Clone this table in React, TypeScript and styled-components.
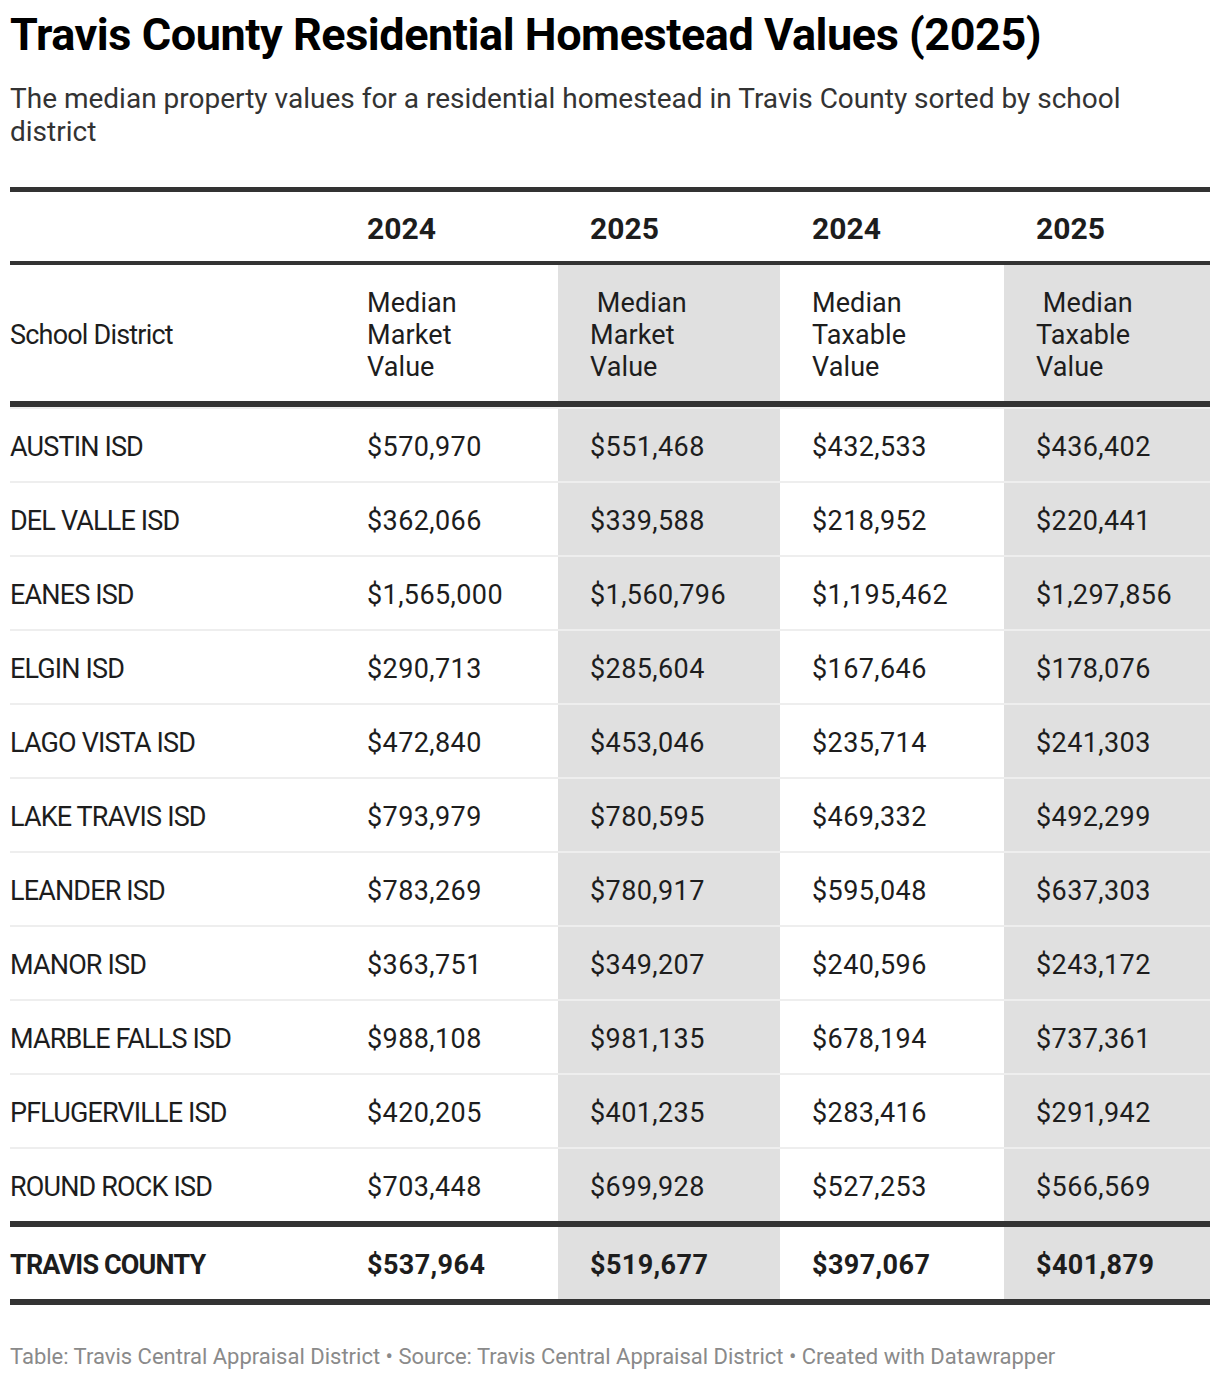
import React from "react";
import styled, { createGlobalStyle } from "styled-components";

const GlobalStyle = createGlobalStyle`
  body {
    margin: 0;
    background: #fff;
    font-family: Roboto, "Liberation Sans", sans-serif;
    color: #1d1d1d;
  }
`;

const Page = styled.div`
  width: 1200px;
  padding: 0 10px;
`;

const Title = styled.h1`
  margin: 0;
  padding-top: 10px;
  font-size: 45px;
  line-height: 50px;
  font-weight: 700;
  color: #000;
  letter-spacing: -0.45px;
`;

const Subtitle = styled.p`
  margin: 22px 0 0;
  font-size: 28px;
  line-height: 33px;
  color: #333;
`;

const Table = styled.div`
  margin-top: 39px;
  border-top: 5px solid #333;
  border-bottom: 6px solid #333;
`;

const COLS = "325px 223px 222px 224px 206px";

const YearRow = styled.div`
  display: grid;
  grid-template-columns: ${COLS};
  height: 69px;
  align-items: center;
  border-bottom: 4px solid #333;
`;

const Year = styled.div`
  padding: 3px 0 0 32px;
  font-size: 30px;
  font-weight: 700;
`;

const LabelRow = styled.div`
  display: grid;
  grid-template-columns: ${COLS};
  height: 136px;
  border-bottom: 6px solid #333;
`;

const Row = styled.div<{ $total?: boolean }>`
  display: grid;
  grid-template-columns: ${COLS};
  height: 72px;
  border-top: ${(p) => (p.$total ? "6px solid #333" : "2px solid rgba(0, 0, 0, 0.065)")};
  font-weight: ${(p) => (p.$total ? 700 : 400)};
`;

const Cell = styled.div<{ $shaded?: boolean; $first?: boolean }>`
  display: flex;
  align-items: center;
  padding: 3px 0 0 ${(p) => (p.$first ? "0" : "32px")};
  background: ${(p) => (p.$shaded ? "#e0e0e0" : "transparent")};
  font-size: 27px;
  line-height: 32px;
  letter-spacing: ${(p) => (p.$first ? "-0.85px" : "0.4px")};
  white-space: pre-line;
`;

const Label = styled(Cell)`
  letter-spacing: ${(p) => (p.$first ? "-0.8px" : "0.1px")};
`;

const Footer = styled.div`
  margin-top: 39px;
  font-size: 22px;
  color: #8a8a8a;
`;

const rows: [string, string, string, string, string][] = [
  ["AUSTIN ISD", "$570,970", "$551,468", "$432,533", "$436,402"],
  ["DEL VALLE ISD", "$362,066", "$339,588", "$218,952", "$220,441"],
  ["EANES ISD", "$1,565,000", "$1,560,796", "$1,195,462", "$1,297,856"],
  ["ELGIN ISD", "$290,713", "$285,604", "$167,646", "$178,076"],
  ["LAGO VISTA ISD", "$472,840", "$453,046", "$235,714", "$241,303"],
  ["LAKE TRAVIS ISD", "$793,979", "$780,595", "$469,332", "$492,299"],
  ["LEANDER ISD", "$783,269", "$780,917", "$595,048", "$637,303"],
  ["MANOR ISD", "$363,751", "$349,207", "$240,596", "$243,172"],
  ["MARBLE FALLS ISD", "$988,108", "$981,135", "$678,194", "$737,361"],
  ["PFLUGERVILLE ISD", "$420,205", "$401,235", "$283,416", "$291,942"],
  ["ROUND ROCK ISD", "$703,448", "$699,928", "$527,253", "$566,569"],
];

const total = ["TRAVIS COUNTY", "$537,964", "$519,677", "$397,067", "$401,879"];

const labels = [
  "School District",
  "Median\nMarket\nValue",
  "\u00a0Median\nMarket\nValue",
  "Median\nTaxable\nValue",
  "\u00a0Median\nTaxable\nValue",
];

const shaded = (i: number) => i === 2 || i === 4;

const App: React.FC = () => {
  return (
    <Page>
      <GlobalStyle />
      <Title>Travis County Residential Homestead Values (2025)</Title>
      <Subtitle>
        The median property values for a residential homestead in Travis County sorted by school
        district
      </Subtitle>
      <Table>
        <YearRow>
          <div />
          <Year>2024</Year>
          <Year>2025</Year>
          <Year>2024</Year>
          <Year>2025</Year>
        </YearRow>
        <LabelRow>
          {labels.map((l, i) => (
            <Label key={i} $first={i === 0} $shaded={shaded(i)}>
              {l}
            </Label>
          ))}
        </LabelRow>
        {rows.map((r) => (
          <Row key={r[0]}>
            {r.map((v, i) => (
              <Cell key={i} $first={i === 0} $shaded={shaded(i)}>
                {v}
              </Cell>
            ))}
          </Row>
        ))}
        <Row $total>
          {total.map((v, i) => (
            <Cell key={i} $first={i === 0} $shaded={shaded(i)}>
              {v}
            </Cell>
          ))}
        </Row>
      </Table>
      <Footer>
        Table: Travis Central Appraisal District • Source: Travis Central Appraisal District • Created
        with Datawrapper
      </Footer>
    </Page>
  );
};

export default App;
